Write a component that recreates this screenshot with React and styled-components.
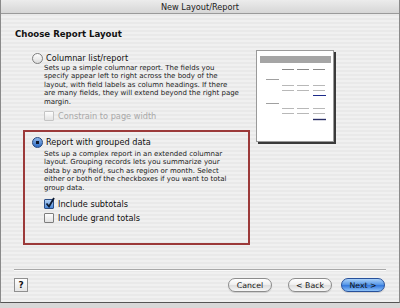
import React from "react";
import styled, { createGlobalStyle } from "styled-components";

const GlobalStyle = createGlobalStyle`
  html, body {
    margin: 0;
    padding: 0;
    background: #dcdcdc;
    font-family: "DejaVu Sans", "Liberation Sans", sans-serif;
  }
`;

const Screen = styled.div`
  width: 400px;
  height: 308px;
  overflow: hidden;
  background: #d8d8d8;
`;

const Window = styled.div`
  height: 303px;
  box-sizing: border-box;
  display: flex;
  flex-direction: column;
  border-left: 1px solid #8a8a8a;
  border-right: 1px solid #8a8a8a;
  border-bottom: 1px solid #555;
  background: repeating-linear-gradient(#f0f0f0 0 2px, #e9e9e9 2px 4px);
`;

const TitleBar = styled.div`
  height: 13px;
  flex: none;
  display: flex;
  align-items: center;
  justify-content: center;
  font-size: 8.2px;
  color: #222;
  background: linear-gradient(#ececec, #d6d6d6);
  border-bottom: 1px solid #9a9a9a;
`;

const Heading = styled.div`
  margin: 14px 0 0 14px;
  font-size: 8.6px;
  font-weight: bold;
  line-height: 12px;
  color: #111;
`;

const Body = styled.div`
  display: grid;
  grid-template-columns: 227px 80px;
  column-gap: 6px;
  margin: 10px 0 0 22px;
  align-items: start;
`;

const Column = styled.div`
  display: flex;
  flex-direction: column;
`;

const Option = styled.div`
  box-sizing: border-box;
  padding: ${(p) => (p.$boxed ? "4px 7px 19px" : "2px 9px 0")};
  border: ${(p) => (p.$boxed ? "2px solid #9c3a3a" : "none")};
  margin-top: ${(p) => (p.$boxed ? "8px" : "0")};
`;

const Row = styled.div`
  display: flex;
  align-items: center;
  height: 12px;
  gap: 3px;
  font-size: 8.2px;
  color: ${(p) => (p.$disabled ? "#a8a8a8" : "#111")};
  margin: ${(p) => p.$m || "0"};
  padding-left: ${(p) => (p.$indent ? "12px" : "0")};
`;

const Radio = styled.span`
  width: 9px;
  height: 9px;
  border-radius: 50%;
  flex: none;
  border: 1px solid ${(p) => (p.$on ? "#24467d" : "#7d7d7d")};
  background: ${(p) =>
    p.$on
      ? "radial-gradient(circle at 50% 50%, #111c30 0 1.6px, transparent 2px), linear-gradient(#8fb8ea, #2f6cc4)"
      : "linear-gradient(#fdfdfd, #dcdcdc)"};
`;

const Check = styled.span`
  position: relative;
  width: 8px;
  height: 8px;
  flex: none;
  border: 1px solid ${(p) => (p.$disabled ? "#c4c4c4" : p.$on ? "#2d4f86" : "#7d7d7d")};
  border-radius: 1px;
  background: ${(p) =>
    p.$on ? "linear-gradient(#b4d2f4, #4a88da)" : "linear-gradient(#fdfdfd, #e2e2e2)"};
  margin-right: 1px;
`;

const Tick = styled.svg`
  position: absolute;
  left: 0;
  top: -3px;
`;

const Desc = styled.div`
  margin: ${(p) => p.$m || "0"} 0 0 12px;
  font-size: 7px;
  line-height: 8.4px;
  color: #222;
  white-space: nowrap;
`;

const Preview = styled.svg`
  display: block;
`;

const Separator = styled.div`
  margin: 24px 13px 0;
  height: 1px;
  background: #a9a9a9;
  border-bottom: 1px solid #fafafa;
`;

const Footer = styled.div`
  display: flex;
  align-items: center;
  padding: 7px 14px 0 13px;
`;

const Help = styled.div`
  width: 14px;
  height: 14px;
  box-sizing: border-box;
  border: 1px solid #8f8f8f;
  background: linear-gradient(#ffffff, #e6e6e6);
  display: flex;
  align-items: center;
  justify-content: center;
  font-size: 9px;
  font-weight: bold;
  color: #111;
  margin-right: auto;
`;

const Button = styled.div`
  width: 44px;
  height: 14px;
  box-sizing: border-box;
  border-radius: 8px;
  display: flex;
  align-items: center;
  justify-content: center;
  font-size: 7.8px;
  margin-left: ${(p) => p.$gap || "0"};
  color: #111;
  border: 1px solid ${(p) => (p.$primary ? "#27509a" : "#8c8c8c")};
  background: ${(p) =>
    p.$primary
      ? "linear-gradient(#a9d0f8 0%, #5c9be8 45%, #3479de 55%, #8ec2f8 100%)"
      : "linear-gradient(#ffffff 0%, #f1f1f1 45%, #dedede 55%, #f7f7f7 100%)"};
  box-shadow: 0 1px 1px rgba(0, 0, 0, 0.15);
`;

const dashes = (y, color = "#b8b8b8") =>
  [26, 41, 57].map((x) => (
    <line key={x + "-" + y} x1={x} y1={y} x2={x + 12} y2={y} stroke={color} strokeWidth="1" />
  ));

const PagePreview = () => (
  <Preview width="80" height="94" viewBox="0 0 80 94">
    <rect x="0.5" y="0.5" width="77" height="91" fill="#fff" stroke="#9a9a9a" />
    <rect x="78" y="2" width="2" height="92" fill="#3a3a3a" />
    <rect x="2" y="92" width="78" height="2" fill="#3a3a3a" />
    <rect x="4" y="6" width="71" height="7" fill="#a5a5a5" />
    {dashes(19.5, "#8a8a8a")}
    <line x1="10" y1="29.5" x2="23" y2="29.5" stroke="#a0a0a0" />
    {dashes(35.5)}
    {dashes(40.5)}
    <line x1="57" y1="45.5" x2="70" y2="45.5" stroke="#1c2a8a" />
    <line x1="10" y1="53.5" x2="23" y2="53.5" stroke="#a0a0a0" />
    {dashes(58.5)}
    {dashes(63.5)}
    <line x1="57" y1="69.5" x2="70" y2="69.5" stroke="#2a2f66" strokeWidth="1.4" />
  </Preview>
);

const CheckRow = ({ on, disabled, label, m }) => (
  <Row $indent $disabled={disabled} $m={m}>
    <Check $on={on} $disabled={disabled}>
      {on && (
        <Tick width="10" height="11" viewBox="0 0 10 11">
          <path d="M1.5 6.5 L4 9.5 L9 1" fill="none" stroke="#0d1b33" strokeWidth="1.8" />
        </Tick>
      )}
    </Check>
    {label}
  </Row>
);

export default function App() {
  return (
    <Screen>
      <GlobalStyle />
      <Window>
        <TitleBar>New Layout/Report</TitleBar>
        <Heading>Choose Report Layout</Heading>
        <Body>
          <Column>
            <Option>
              <Row>
                <Radio />
                Columnar list/report
              </Row>
              <Desc>
                Sets up a simple columnar report. The fields you
                <br />
                specify appear left to right across the body of the
                <br />
                layout, with field labels as column headings. If there
                <br />
                are many fields, they will extend beyond the right page
                <br />
                margin.
              </Desc>
              <CheckRow disabled label="Constrain to page width" m="4px 0 0" />
            </Option>
            <Option $boxed>
              <Row>
                <Radio $on />
                Report with grouped data
              </Row>
              <Desc $m="2px">
                Sets up a complex report in an extended columnar
                <br />
                layout. Grouping records lets you summarize your
                <br />
                data by any field, such as region or month. Select
                <br />
                either or both of the checkboxes if you want to total
                <br />
                group data.
              </Desc>
              <CheckRow on label="Include subtotals" m="6px 0 0" />
              <CheckRow label="Include grand totals" m="2px 0 0" />
            </Option>
          </Column>
          <PagePreview />
        </Body>
        <Separator />
        <Footer>
          <Help>?</Help>
          <Button>Cancel</Button>
          <Button $gap="16px">&lt; Back</Button>
          <Button $gap="9px" $primary>
            Next &gt;
          </Button>
        </Footer>
      </Window>
    </Screen>
  );
}
